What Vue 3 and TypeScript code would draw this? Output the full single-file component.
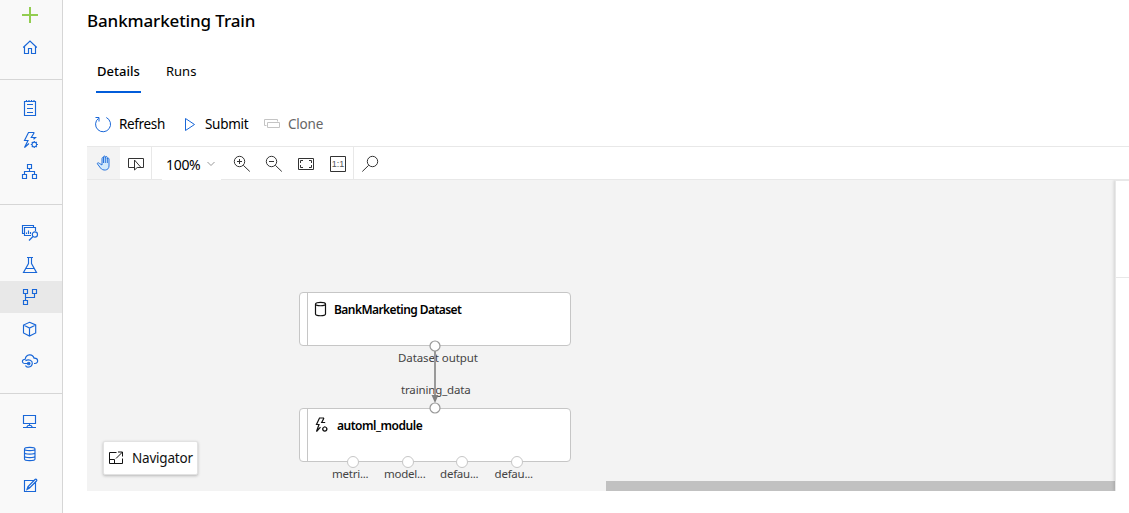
<script setup lang="ts">
interface NavItem {
  name: string
  paths: string[]
  active?: boolean
}

const navGroups: NavItem[][] = [
  [
    { name: 'new', paths: ['M10 2v16M2 10h16'] },
    { name: 'home', paths: ['M3.200 10.500 10 4l6.800 6.500M4.500 9.500v7h4v-5h3v5h4v-7'] },
  ],
  [
    { name: 'notebooks', paths: ['M4.500 3.500h11v14h-11zM7 6.500h6M7 10.500h6M7 14.500h6M6.500 2v1.500M9 2v1.500M11.500 2v1.500M14 2v1.500'] },
    {
      name: 'automated',
      paths: [
        'M14.300 2.500H8.500L4.500 10.500h3.500L4.500 17.500l4.500-4M14.300 2.500l-3 5h4.200l-2 1.800',
        'M12 14.500a2.300 2.300 0 1 0 4.600 0a2.300 2.300 0 1 0-4.600 0M14.300 11v1.200M14.300 16.800V18M10.800 14.500H12M16.600 14.500h1.300M11.800 12l.9.900M16 16.200l.8.800M16.800 12l-.9.900M12.700 16.200l-.9.800',
      ],
    },
    { name: 'designer', paths: ['M7.500 2.500h4v4h-4zM2.500 12.500h4v4h-4zM12.500 12.500h4v4h-4zM9.500 6.500v3M4.500 12.500v-3h10v3'] },
  ],
  [
    {
      name: 'datasets',
      paths: [
        'M4.500 10.500h-2v-8h11v2M11 12.500H4.500v-8h11V8M6.500 11V9.500M8.500 11V7.500M10.500 11V9',
        'M12.300 11.500a2.600 2.600 0 1 0 5.200 0a2.600 2.600 0 1 0-5.200 0M13 13.500l-4 4',
      ],
    },
    { name: 'experiments', paths: ['M7 2.500h6M8.500 2.500v6l-5 9h13l-5-9v-6M5.500 13.500h9'] },
    { name: 'pipelines', active: true, paths: ['M3.500 2.500h4v4h-4zM12.500 2.500h4v4h-4zM3.500 13.500h4v4h-4zM5.500 6.500v7M5.500 10.500h9v-4'] },
    { name: 'models', paths: ['M9.500 3.300 15.700 6v8L9.500 17 3.500 14V6zM3.500 6l6 3 6.200-3M9.500 9v8'] },
    {
      name: 'endpoints',
      paths: [
        'M5 12.500C1.500 12.500 1.500 8.300 5.200 8.200C6 3 12.500 2.300 14 7.200C18.800 7 18.700 12.500 14.800 12.500H14',
        'M5.500 9.700C9 7.500 12.500 10 12.300 12.500C12 16.500 6.500 17.200 5.500 14.500M5 12.500h5M7.500 12.500a1.200 1.200 0 1 0 2.400 0a1.200 1.200 0 1 0-2.400 0',
      ],
    },
  ],
  [
    { name: 'compute', paths: ['M3.500 3.500h12v8h-12zM9.500 11.500v2M6.500 15.500l1.500-2h3l1.500 2zM3 15.500h13'] },
    {
      name: 'datastores',
      paths: ['M4.500 5c0-2.200 10.500-2.200 10.500 0v10c0 2.200-10.500 2.200-10.500 0zM4.500 5c0 2.200 10.500 2.200 10.500 0M4.500 8.500c0 2.200 10.500 2.200 10.500 0M4.500 12c0 2.200 10.500 2.200 10.500 0'],
    },
    { name: 'labeling', paths: ['M13.500 4.500h-9v11h11v-9M7 13.500l1-3 7-7c1-1 2.500.5 1.500 1.500l-7 7zM8 10.500l1.500 1.500'] },
  ],
]

const outputs: string[] = ['metri...', 'model...', 'defau...', 'defau...']
</script>

<template>
  <div class="app">
    <nav class="sidebar">
      <div v-for="(group, g) in navGroups" :key="g" class="nav-group">
        <div v-for="item in group" :key="item.name" class="nav-item" :class="[item.name, { active: item.active }]">
          <svg width="20" height="20" viewBox="0 0 20 20"><path v-for="(d, i) in item.paths" :key="i" :d="d" /></svg>
        </div>
      </div>
    </nav>
    <main class="content">
      <h1>Bankmarketing Train</h1>
      <div class="tabs">
        <div class="tab selected"><span>Details</span></div>
        <div class="tab"><span>Runs</span></div>
      </div>
      <div class="commands">
        <svg class="blue" width="20" height="20" viewBox="0 0 20 20"><path d="M5.500 4.300A7.500 7.500 0 1 0 13.300 3.500M2.500 3.500H6v4" /></svg>
        <span class="cmd refresh">Refresh</span>
        <svg class="blue" width="20" height="20" viewBox="0 0 20 20"><path d="M6.500 4.500v12l9-6z" /></svg>
        <span class="cmd submit">Submit</span>
        <svg class="gray" width="20" height="20" viewBox="0 0 20 20"><path d="M4.500 11.500h-2v-6h13v2M5.500 8.500h12v5h-12z" /></svg>
        <span class="cmd clone">Clone</span>
      </div>
      <div class="toolbar">
        <div class="tool hand">
          <svg width="20" height="20" viewBox="0 0 20 20">
            <path class="hand-fill" d="M7 12V5.500c0-1.300 1.500-1.300 1.500 0V4c0-1.300 1.800-1.300 1.800 0v.5c0-1.300 2-1.300 2 0V6c0-1.200 1.700-1.200 1.700 0v7c0 5-6.500 5-8.500 2l-3-4c-.6-1.200.8-1.700 1.800-.7z" />
            <path d="M8.500 5v5M10.300 4v6M12.300 5v5" />
          </svg>
        </div>
        <div class="tool select">
          <svg width="20" height="20" viewBox="0 0 20 20"><path d="M8 13.500H2.500v-9h15v9H15M8.500 6v10l2.700-2.500H15z" /></svg>
        </div>
        <div class="zoom-level"><span>100%</span>
          <svg width="10" height="10" viewBox="0 0 10 10"><path d="m1.500 2 3.500 3.500L8.500 2" /></svg>
        </div>
        <div class="zoom-tools">
          <svg width="20" height="20" viewBox="0 0 20 20"><path d="M2.300 7.500a5.200 5.200 0 1 0 10.400 0a5.200 5.200 0 1 0-10.400 0M11.300 11.300l6.500 6.200M5 7.500h5M7.500 5v5" /></svg>
          <svg width="20" height="20" viewBox="0 0 20 20"><path d="M2.300 7.500a5.200 5.200 0 1 0 10.400 0a5.200 5.200 0 1 0-10.400 0M11.300 11.300l6.500 6.200M5 7.500h5" /></svg>
          <svg width="20" height="20" viewBox="0 0 20 20"><path d="M2.500 4.500h15v11h-15zM4.500 9V6.500H7M13 6.500h2.500V9M4.500 11v2.500H7M13 13.500h2.500V11" /></svg>
          <svg width="20" height="20" viewBox="0 0 20 20"><path d="M2.500 2.500h15v15h-15z" /><text x="10" y="13.300">1:1</text></svg>
        </div>
        <div class="tool search">
          <svg width="20" height="20" viewBox="0 0 20 20"><path d="M7.300 7.500a5.200 5.200 0 1 0 10.400 0a5.200 5.200 0 1 0-10.400 0M8.700 11.300 2.300 17.500" /></svg>
        </div>
      </div>
      <div class="canvas">
        <section class="node dataset">
          <svg width="20" height="20" viewBox="0 0 20 20"><path d="M4.500 5c0-2.300 10-2.300 10 0v10c0 2.300-10 2.300-10 0zM4.500 5c0 2.300 10 2.300 10 0" /></svg>
          <strong>BankMarketing Dataset</strong>
        </section>
        <section class="node module">
          <svg width="20" height="20" viewBox="0 0 20 20"><path d="M13 3H8.500L5.500 9.500H8L5.500 16.500l4-4.300M13 3l-2.300 4.500h3.500M11.800 14a2 2 0 1 0 4 0a2 2 0 1 0-4 0M13.800 11.300V12M13.800 16v.8M11 14h.8M15.800 14h.8" /></svg>
          <strong>automl_module</strong>
        </section>
        <span class="port-label data-out">Dataset output</span>
        <span class="port-label data-in">training_data</span>
        <svg class="edge" width="20" height="76" viewBox="0 0 20 76">
          <path class="line" d="M10 12v46" /><path class="arrow" d="M6.500 56h7L10 64z" />
          <circle cx="10" cy="7" r="5" /><circle cx="10" cy="69" r="5" />
        </svg>
        <div class="outputs">
          <div v-for="(label, i) in outputs" :key="i" class="output"><i></i><span>{{ label }}</span></div>
        </div>
        <button class="navigator">
          <svg width="20" height="20" viewBox="0 0 20 20"><path d="M10.500 4.500h-7v11h13v-5M3.500 11.500h5v4M10 10.500l6.500-6.500M12 4h4.500v4.500" /></svg>
          <span>Navigator</span>
        </button>
        <div class="scrollbar"></div>
        <aside class="panel"><div></div></aside>
      </div>
    </main>
  </div>
</template>

<style>
html, body { margin: 0; background: #fff; overflow: hidden; }
</style>

<style scoped>
.app { display: flex; width: 1129px; height: 513px; overflow: hidden; font-family: "Noto Sans", "Open Sans", sans-serif; font-size: 13.500px; color: #000; background: #fff; }
svg { display: block; flex: none; fill: none; stroke: #333; stroke-width: 1; overflow: visible; }
span, strong, h1 { white-space: nowrap; }
.sidebar { box-sizing: border-box; width: 63px; flex: none; border-right: 1px solid #d6d6d6; background: #f9f9f9; }
.nav-group { padding: 12px 0 16px; border-bottom: 1px solid #d6d6d6; }
.nav-group:first-child { padding-top: 0; margin-top: -1px; }
.nav-group:last-child { border: 0; }
.nav-item { height: 32px; display: flex; align-items: center; padding-left: 20px; }
.nav-item svg { stroke: #1967d8; stroke-width: 1.150; }
.nav-item.new svg { stroke: #92cd50; stroke-width: 2; }
.nav-item.active { background: #e8e8e8; }
.content { flex: none; width: 1042px; margin-left: 24px; }
h1 { margin: 0; padding-top: 9px; height: 24px; line-height: 24px; font-size: 17px; font-weight: 500; letter-spacing: -0.120px; }
.tabs { display: flex; margin: 22px 0 0 9px; height: 38px; gap: 24px; }
.tab { box-sizing: border-box; height: 38px; line-height: 32px; padding: 0 1px; font-size: 13px; }
.tab.selected { width: 45px; border-bottom: 2px solid #015cda; font-weight: 500; }
.commands { display: flex; align-items: center; height: 20px; padding: 21px 0 12px 6px; }
.blue { stroke: #1967d8; }
.gray { stroke: #c4c4c4; }
.cmd { margin-left: 6px; letter-spacing: -0.350px; }
.refresh { width: 60px; }
.submit { width: 57px; margin-left: 6px; letter-spacing: -0.300px; }
.clone { color: #666; letter-spacing: -0.200px; }
.toolbar { box-sizing: border-box; display: flex; height: 34px; border-top: 1px solid #e8e8e8; border-bottom: 1px solid #e8e8e8; }
.tool { box-sizing: border-box; width: 32px; height: 32px; display: flex; align-items: center; justify-content: center; }
.hand { width: 33px; padding-left: 3px; background: #f3f3f3; }
.hand svg { stroke: #2a74dc; }
.hand-fill { fill: #d3eafb; }
.select { padding-top: 1px; border-right: 1px solid #e8e8e8; }
.zoom-level { display: flex; align-items: center; width: 59px; height: 33px; margin-left: 10px; padding-left: 4px; box-sizing: border-box; background: #fff; font-size: 14px; letter-spacing: -0.300px; padding-top: 2px; }
.zoom-level svg { margin-left: 6px; stroke: #999; }
.zoom-tools { box-sizing: border-box; display: flex; align-items: center; gap: 12px; height: 32px; padding: 2px 5px 0 11px; border-right: 1px solid #e8e8e8; }
.search { padding-top: 2px; }
.zoom-tools text { font: 9px "Liberation Sans", sans-serif; text-anchor: middle; fill: #555; stroke: none; }
.canvas { position: relative; height: 311px; overflow: hidden; background: #f3f3f3; }
.node { position: absolute; left: 212px; box-sizing: border-box; width: 272px; height: 54px; display: flex; align-items: flex-start; padding: 6px 0 0 11px; background: linear-gradient(to right, #fff 7px, #c6c6c6 7px, #c6c6c6 8px, #fff 8px); border: 1px solid #c6c6c6; border-radius: 4px; }
.node strong { font-size: 12px; font-weight: 600; line-height: 22px; margin-left: 3px; letter-spacing: -0.560px; }
.node svg { stroke: #111; stroke-width: 1.200; }
.dataset { top: 112px; }
.module { top: 228px; }
.module strong { margin-left: 6px; letter-spacing: -0.480px; }
.port-label { position: absolute; font-size: 11.500px; line-height: 16px; color: #444; }
.data-out { left: 311px; top: 170px; letter-spacing: -0.100px; }
.data-in { left: 314px; top: 202px; letter-spacing: -0.150px; }
.edge { position: absolute; left: 338px; top: 159px; }
.edge .line { stroke: #999; stroke-width: 2; }
.edge .arrow { fill: #808080; stroke: none; }
.edge circle { fill: #fff; stroke: #999; stroke-width: 1.200; }
.outputs { position: absolute; left: 236px; top: 276px; display: flex; }
.output { width: 54.500px; display: flex; flex-direction: column; align-items: center; font-size: 11.500px; letter-spacing: -0.250px; line-height: 16px; color: #444; }
.output i { box-sizing: border-box; width: 12px; height: 12px; margin-left: 6px; border: 1px solid #c6c6c6; border-radius: 50%; background: #fff; }
.output span { margin-top: -2px; }
.navigator { position: absolute; left: 16px; top: 261px; width: 95px; height: 34px; display: flex; align-items: center; padding: 0 0 0 2px; border: 1px solid #e2e2e2; border-radius: 2px; background: #fff; box-shadow: 0 1px 3px rgba(0, 0, 0, .25); color: #111; font: 13.500px "Noto Sans", sans-serif; }
.navigator svg { stroke: #111; }
.navigator span { margin-left: 6px; letter-spacing: -0.200px; }
.scrollbar { position: absolute; left: 519px; bottom: 0; width: 509px; height: 10px; background: #c1c1c1; }
.panel { position: absolute; left: 1028px; top: 0; width: 14px; height: 311px; box-sizing: border-box; border-top: 1px solid #e8e8e8; border-left: 1px solid #e8e8e8; background: #fff; box-shadow: -1px 0 3px rgba(0, 0, 0, .15); }
.panel div { height: 96px; border-bottom: 1px solid #e8e8e8; }
</style>
